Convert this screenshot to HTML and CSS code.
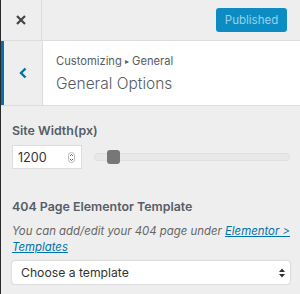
FILE: index.html
```html
<!DOCTYPE html>
<html>
<head>
<meta charset="utf-8">
<link rel="stylesheet" href="styles.css">
</head>
<body>
<div class="panel">
  <div class="topbar">
    <div class="close">
      <svg width="10" height="10" viewBox="0 0 10 10"><path d="M1 1 L9 9 M9 1 L1 9" stroke="#444" stroke-width="2.2" stroke-linecap="butt"/></svg>
    </div>
    <div class="spacer"></div>
    <button class="publish">Published</button>
  </div>
  <div class="section-head">
    <div class="back">
      <svg width="8" height="12" viewBox="0 0 8 12"><path d="M6.5 1.5 L2 6 L6.5 10.5" fill="none" stroke="#0073aa" stroke-width="2.4"/></svg>
    </div>
    <div class="titles">
      <div class="crumb">Customizing <span class="tri">▸</span> General</div>
      <div class="title">General Options</div>
    </div>
  </div>
  <div class="content">
    <div class="label">Site Width(px)</div>
    <div class="range-row">
      <div class="num">
        <span>1200</span>
        <svg class="spin" width="7" height="11" viewBox="0 0 7 11"><rect x="0.5" y="0.5" width="6" height="10" rx="3" fill="none" stroke="#bbb"/><path d="M2 4 L3.5 2.5 L5 4 M2 7 L3.5 8.5 L5 7" fill="none" stroke="#555" stroke-width="0.9"/></svg>
      </div>
      <div class="track"><div class="thumb"></div></div>
    </div>
    <div class="label label2">404 Page Elementor Template</div>
    <div class="desc">You can add/edit your 404 page under <a href="#">Elementor &gt; Templates</a></div>
    <div class="select">
      <span>Choose a template</span>
      <svg width="6" height="10" viewBox="0 0 6 10"><path d="M0 4 L3 0.5 L6 4 Z M0 6 L3 9.5 L6 6 Z" fill="#333"/></svg>
    </div>
  </div>
</div>
</body>
</html>
```
FILE: styles.css
```css
* { box-sizing: border-box; }
html, body { margin: 0; padding: 0; }
body {
  width: 300px;
  height: 294px;
  overflow: hidden;
  background: #eee;
  font-family: Inter, "Noto Sans", sans-serif;
  color: #555d66;
}
.panel {
  height: 294px;
  border-left: 1px solid #2a2a2a;
  background: #eee;
}
.topbar {
  display: flex;
  align-items: center;
  height: 41px;
  border-bottom: 1px solid #ddd;
}
.close {
  width: 41px;
  height: 40px;
  border-right: 1px solid #ddd;
  display: flex;
  align-items: center;
  justify-content: center;
}
.spacer { flex: 1; }
.publish {
  width: 71px;
  height: 24px;
  margin-right: 13px;
  border: 0;
  border-radius: 3px;
  background: #0b8dc4;
  color: #9ad1ea;
  font-family: inherit;
  font-size: 11.5px;
  padding: 0;
}
.section-head {
  display: flex;
  height: 65px;
  border-bottom: 1px solid #ddd;
  background: #fff;
}
.back {
  width: 42px;
  border-left: 3px solid #0073aa;
  border-right: 1px solid #ddd;
  background: #eee;
  display: flex;
  align-items: center;
  justify-content: center;
}
.titles {
  padding: 12px 0 0 13px;
}
.crumb {
  font-size: 11.2px;
  line-height: 16px;
  color: #555d66;
}
.tri { font-size: 8px; vertical-align: 1px; }
.title {
  font-size: 15.5px;
  font-weight: 300;
  line-height: 22px;
  margin-top: 4px;
  color: #555d66;
}
.content {
  padding: 16px 10px 0 11px;
}
.label {
  font-size: 12.4px;
  font-weight: 600;
  line-height: 18px;
  color: #555d66;
}
.range-row {
  display: flex;
  align-items: center;
  margin-top: 5px;
  height: 24px;
}
.num {
  width: 70px;
  height: 24px;
  background: #fff;
  border: 1px solid #ddd;
  display: flex;
  align-items: center;
  justify-content: space-between;
  padding: 0 6px 0 5px;
  font-size: 12.6px;
  color: #333;
}
.spin { margin-top: 1px; }
.track {
  flex: 1;
  margin-left: 12px;
  height: 8px;
  border-radius: 4px;
  background: #e8e8e8;
  border: 1px solid #e0e0e0;
  position: relative;
}
.thumb {
  position: absolute;
  left: 12px;
  top: -4px;
  width: 13px;
  height: 14px;
  border-radius: 3px;
  background: #777;
}
.label2 { margin-top: 29px; }
.desc {
  margin-top: 7px;
  font-size: 11.4px;
  font-style: italic;
  line-height: 16px;
  color: #666;
}
.desc a { color: #0073aa; }
.select {
  margin-top: 6px;
  height: 23px;
  background: #fff;
  border-radius: 3px;
  box-shadow: 0 0 2px rgba(0,0,0,0.25);
  display: flex;
  align-items: center;
  justify-content: space-between;
  padding: 0 5px 0 9px;
  font-size: 12.2px;
  color: #333;
}
```
